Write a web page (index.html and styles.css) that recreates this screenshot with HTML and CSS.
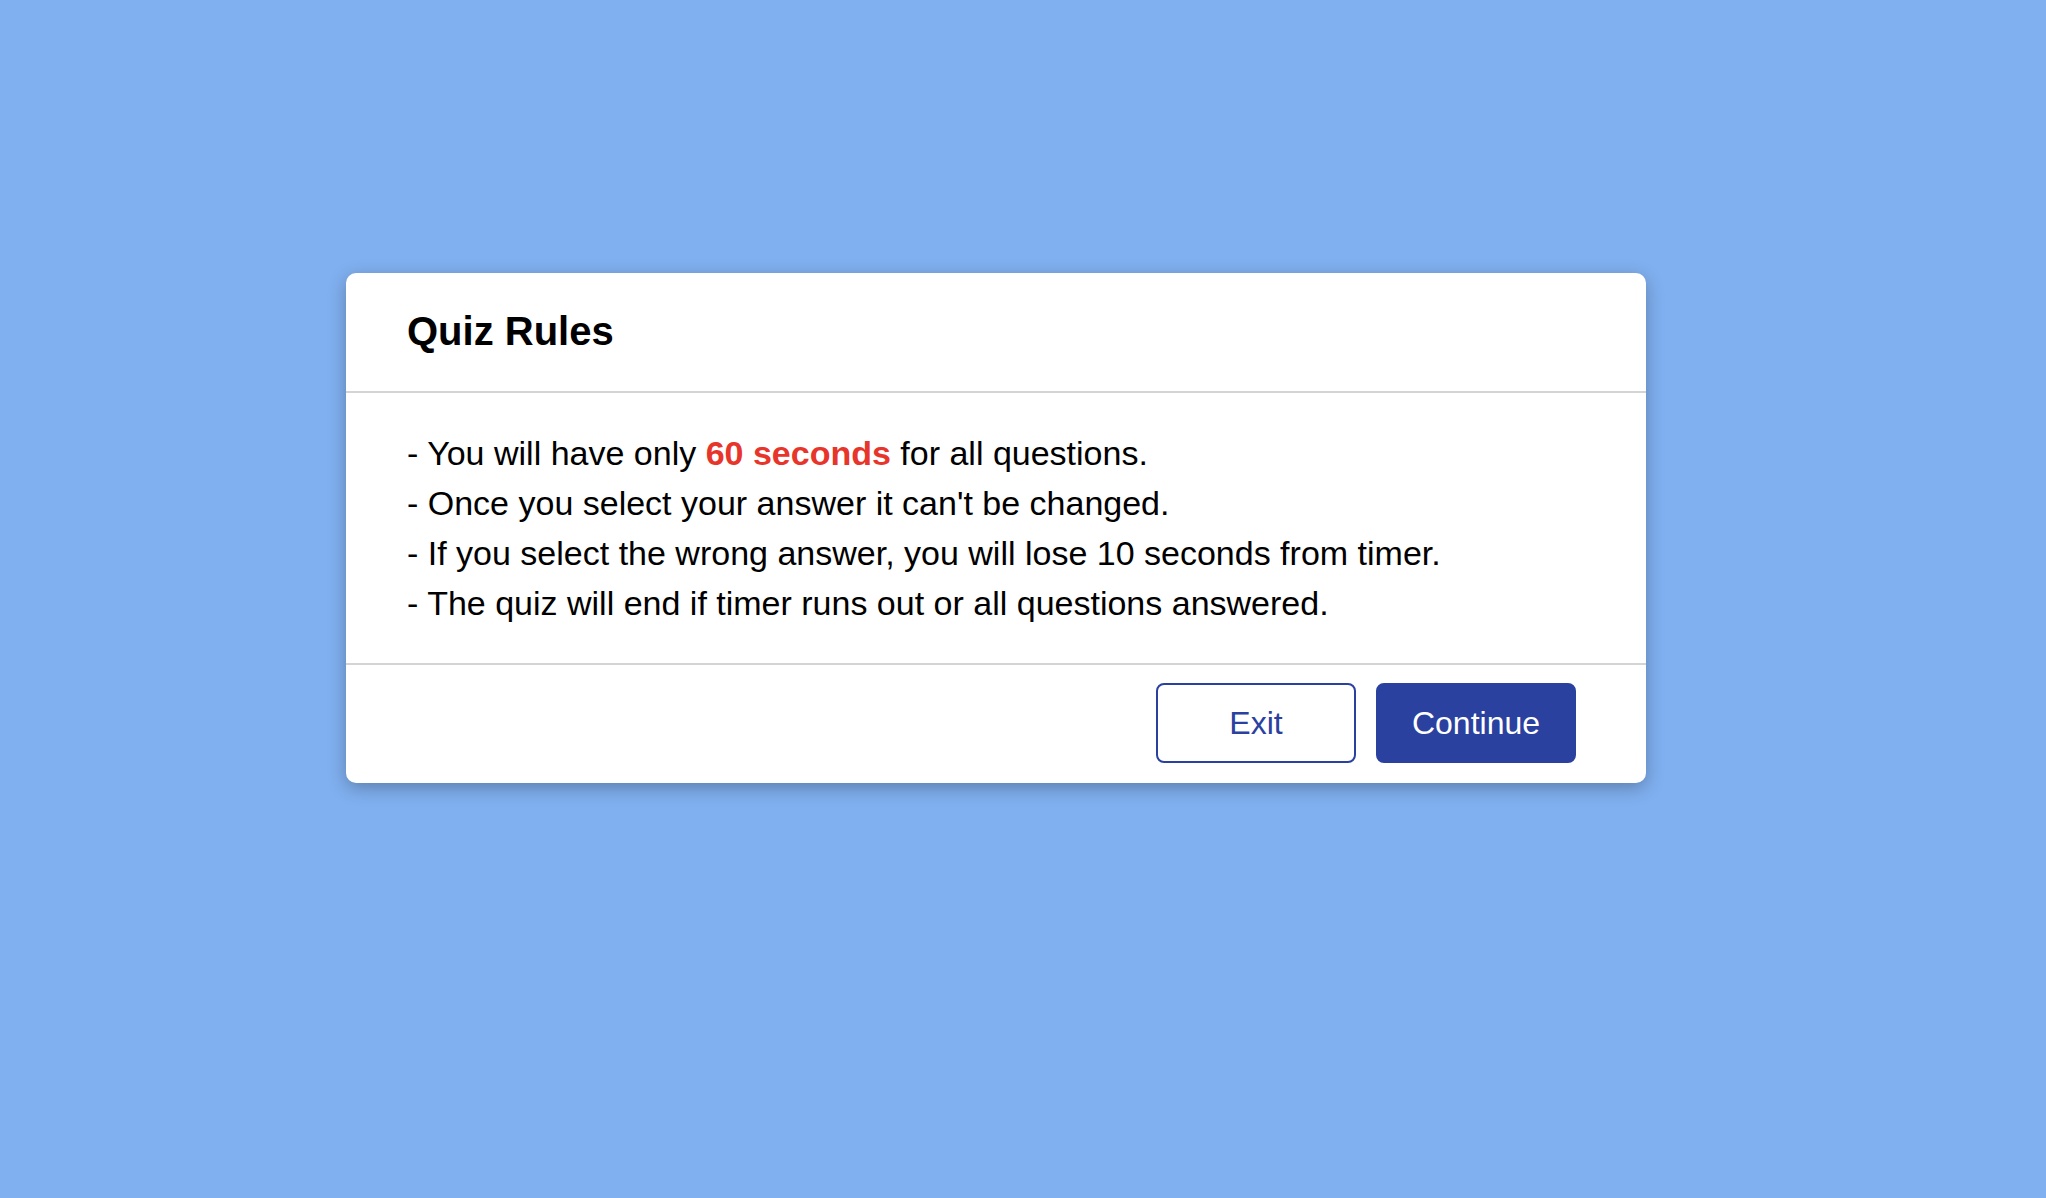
FILE: index.html
```html
<!DOCTYPE html>
<html lang="en">
<head>
<meta charset="utf-8">
<title>Quiz Rules</title>
<link rel="stylesheet" href="styles.css">
</head>
<body>
<div class="page">
  <section class="card">
    <header class="card-header">
      <h1 class="title">Quiz Rules</h1>
    </header>
    <div class="card-body">
      <p class="rule">- You will have only <span class="accent">60 seconds</span> for all questions.</p>
      <p class="rule">- Once you select your answer it can't be changed.</p>
      <p class="rule">- If you select the wrong answer, you will lose 10 seconds from timer.</p>
      <p class="rule">- The quiz will end if timer runs out or all questions answered.</p>
    </div>
    <footer class="card-footer">
      <button class="btn btn-outline" type="button">Exit</button>
      <button class="btn btn-solid" type="button">Continue</button>
    </footer>
  </section>
</div>
</body>
</html>
```

FILE: styles.css
```css
* { box-sizing: border-box; }
html, body {
  margin: 0;
  padding: 0;
  height: 100%;
}
body {
  background: #80b0f0;
  font-family: "Liberation Sans", Arial, Helvetica, sans-serif;
  color: #000;
}
.page {
  padding: 273px 0 0 346px;
}
.card {
  width: 1300px;
  background: #fff;
  border-radius: 10px;
  box-shadow: 0 5px 18px rgba(0, 0, 0, 0.28);
}
.card-header {
  padding: 34px 61px 36px;
  border-bottom: 2px solid #d4d4d4;
}
.title {
  margin: 0;
  font-size: 40px;
  line-height: 48px;
  font-weight: 700;
}
.card-body {
  padding: 35px 61px 35px;
  border-bottom: 2px solid #d4d4d4;
}
.rule {
  margin: 0;
  font-size: 34px;
  line-height: 50px;
}
.accent {
  color: #e8352b;
  font-weight: 700;
}
.card-footer {
  display: flex;
  justify-content: flex-end;
  gap: 20px;
  padding: 18px 70px 20px;
}
.btn {
  width: 200px;
  height: 80px;
  border-radius: 8px;
  font-family: "Liberation Sans", Arial, Helvetica, sans-serif;
  font-size: 32px;
  border: 2px solid #2a41a0;
  cursor: pointer;
}
.btn-outline {
  background: #fff;
  color: #2a41a0;
}
.btn-solid {
  background: #2a41a0;
  color: #fff;
}
```
